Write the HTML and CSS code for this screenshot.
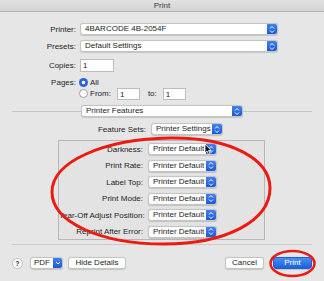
FILE: index.html
```html
<!DOCTYPE html>
<html lang="en">
<head>
    <meta charset="UTF-8">
    <title>Print</title>
    <link rel="stylesheet" href="styles.css">
</head>
<body>
<div class="window">
    <div class="titlebar">Print</div>

    <!-- printer / presets -->
    <div class="form">
        <div class="field row-printer">
            <span class="label">Printer:</span>
            <div class="popup w-wide">
                <span class="popup-text">4BARCODE 4B-2054F</span>
                <span class="stepper"><svg width="6" height="9" viewBox="0 0 6 9"><path d="M1 3.5 L3 1.5 L5 3.5 M1 5.5 L3 7.5 L5 5.5" fill="none" stroke="#fff" stroke-width="1"/></svg></span>
            </div>
        </div>
        <div class="field row-presets">
            <span class="label">Presets:</span>
            <div class="popup w-wide">
                <span class="popup-text">Default Settings</span>
                <span class="stepper"><svg width="6" height="9" viewBox="0 0 6 9"><path d="M1 3.5 L3 1.5 L5 3.5 M1 5.5 L3 7.5 L5 5.5" fill="none" stroke="#fff" stroke-width="1"/></svg></span>
            </div>
        </div>
        <div class="field row-copies">
            <span class="label">Copies:</span>
            <div class="textbox w-copies">1</div>
        </div>
        <div class="field row-pages">
            <span class="label">Pages:</span>
            <span class="radio checked"></span>
            <span class="radio-text">All</span>
        </div>
        <div class="field row-from">
            <span class="label"></span>
            <span class="radio"></span>
            <span class="radio-text">From:</span>
            <div class="textbox w-page">1</div>
            <span class="to-text">to:</span>
            <div class="textbox w-page">1</div>
        </div>
    </div>

    <!-- panel selector -->
    <div class="panel-select">
        <span class="sep-line"></span>
        <div class="popup w-panel">
            <span class="popup-text">Printer Features</span>
            <span class="stepper"><svg width="6" height="9" viewBox="0 0 6 9"><path d="M1 3.5 L3 1.5 L5 3.5 M1 5.5 L3 7.5 L5 5.5" fill="none" stroke="#fff" stroke-width="1"/></svg></span>
        </div>
        <span class="sep-line"></span>
    </div>

    <div class="field row-feature">
        <span class="label label-feature">Feature Sets:</span>
        <div class="popup w-feature">
            <span class="popup-text">Printer Settings</span>
            <span class="stepper"><svg width="6" height="9" viewBox="0 0 6 9"><path d="M1 3.5 L3 1.5 L5 3.5 M1 5.5 L3 7.5 L5 5.5" fill="none" stroke="#fff" stroke-width="1"/></svg></span>
        </div>
    </div>

    <!-- feature options -->
    <div class="feature-box">
        <div class="field opt-row">
            <span class="label label-opt">Darkness:</span>
            <div class="popup w-opt"><span class="popup-text">Printer Default</span><span class="stepper"><svg width="6" height="9" viewBox="0 0 6 9"><path d="M1 3.5 L3 1.5 L5 3.5 M1 5.5 L3 7.5 L5 5.5" fill="none" stroke="#fff" stroke-width="1"/></svg></span></div>
        </div>
        <div class="field opt-row">
            <span class="label label-opt">Print Rate:</span>
            <div class="popup w-opt"><span class="popup-text">Printer Default</span><span class="stepper"><svg width="6" height="9" viewBox="0 0 6 9"><path d="M1 3.5 L3 1.5 L5 3.5 M1 5.5 L3 7.5 L5 5.5" fill="none" stroke="#fff" stroke-width="1"/></svg></span></div>
        </div>
        <div class="field opt-row">
            <span class="label label-opt">Label Top:</span>
            <div class="popup w-opt"><span class="popup-text">Printer Default</span><span class="stepper"><svg width="6" height="9" viewBox="0 0 6 9"><path d="M1 3.5 L3 1.5 L5 3.5 M1 5.5 L3 7.5 L5 5.5" fill="none" stroke="#fff" stroke-width="1"/></svg></span></div>
        </div>
        <div class="field opt-row">
            <span class="label label-opt">Print Mode:</span>
            <div class="popup w-opt"><span class="popup-text">Printer Default</span><span class="stepper"><svg width="6" height="9" viewBox="0 0 6 9"><path d="M1 3.5 L3 1.5 L5 3.5 M1 5.5 L3 7.5 L5 5.5" fill="none" stroke="#fff" stroke-width="1"/></svg></span></div>
        </div>
        <div class="field opt-row">
            <span class="label label-opt">Tear-Off Adjust Position:</span>
            <div class="popup w-opt"><span class="popup-text">Printer Default</span><span class="stepper"><svg width="6" height="9" viewBox="0 0 6 9"><path d="M1 3.5 L3 1.5 L5 3.5 M1 5.5 L3 7.5 L5 5.5" fill="none" stroke="#fff" stroke-width="1"/></svg></span></div>
        </div>
        <div class="field opt-row">
            <span class="label label-opt">Reprint After Error:</span>
            <div class="popup w-opt"><span class="popup-text">Printer Default</span><span class="stepper"><svg width="6" height="9" viewBox="0 0 6 9"><path d="M1 3.5 L3 1.5 L5 3.5 M1 5.5 L3 7.5 L5 5.5" fill="none" stroke="#fff" stroke-width="1"/></svg></span></div>
        </div>
    </div>

    <div class="bottom-sep"></div>

    <!-- buttons -->
    <div class="button-bar">
        <span class="help-btn">?</span>
        <div class="pdf-btn">
            <span class="pdf-text">PDF</span>
            <span class="pdf-arrow"><svg width="6" height="4" viewBox="0 0 6 4"><path d="M1 1 L3 3 L5 1" fill="none" stroke="#fff" stroke-width="1"/></svg></span>
        </div>
        <span class="btn w-hide">Hide Details</span>
        <span class="spacer"></span>
        <span class="btn w-cancel">Cancel</span>
        <span class="btn btn-primary w-print">Print</span>
    </div>

    <!-- red marks drawn over the dialog -->
    <svg class="marks" width="324" height="281" viewBox="0 0 324 281">
        <path d="M170 138 C232 137 270 160 270 188 C270 221 226 244 164 244 C100 244 52 222 52 192 C52 161 105 139 170 138 Z" fill="none" stroke="#ec1b12" stroke-width="3"/>
        <ellipse cx="292.5" cy="263.5" rx="22" ry="12.5" fill="none" stroke="#ec1b12" stroke-width="2.5"/>
        <path d="M205 144 L205 153 L207 151 L208.6 154.5 L210 153.8 L208.5 150.5 L211.2 150.5 Z" fill="#111" stroke="#fff" stroke-width="0.8"/>
    </svg>
</div>
</body>
</html>
```

FILE: styles.css
```css
* { margin: 0; padding: 0; box-sizing: border-box; }
body {
    font-family: 'Liberation Sans', Arial, sans-serif;
    font-size: 8px;
    color: #1e1e1e;
    background: #e6e6e6;
}
.window {
    position: relative;
    width: 324px;
    height: 281px;
    background: #e6e6e6;
    overflow: hidden;
}
.titlebar {
    height: 12px;
    line-height: 11px;
    text-align: center;
    color: #3c3c3c;
    background: linear-gradient(#e2e2e2, #d3d3d3);
    border-bottom: 1px solid #b5b5b5;
}

/* generic rows */
.field { display: flex; align-items: center; }
.label {
    width: 80px;
    padding-right: 4px;
    text-align: right;
    flex-shrink: 0;
    white-space: nowrap;
}
.form { padding-top: 11px; }
.row-printer { height: 12px; }
.row-presets { height: 12px; margin-top: 5px; }
.row-copies { height: 13px; margin-top: 7px; }
.row-pages { height: 10px; margin-top: 5px; }
.row-from { height: 11px; margin-top: 1px; }

/* popup buttons */
.popup {
    display: flex;
    align-items: center;
    height: 12px;
    background: #fff;
    border: 1px solid #c4c4c4;
    border-radius: 3px;
    box-shadow: 0 0.5px 1px rgba(0, 0, 0, 0.15);
    overflow: hidden;
}
.popup-text {
    flex: 1;
    padding-left: 4px;
    white-space: nowrap;
    overflow: hidden;
    line-height: 10px;
}
.stepper {
    width: 10px;
    height: 100%;
    display: flex;
    align-items: center;
    justify-content: center;
    background: linear-gradient(#3f82f2, #1b5ad6);
}
.w-wide { width: 198px; }
.w-panel { width: 162px; height: 12px; }
.w-feature { width: 72px; }
.w-opt { width: 69px; }

/* text boxes */
.textbox {
    height: 13px;
    background: #fff;
    border: 1px solid #bdbdbd;
    padding-left: 2px;
    line-height: 11px;
}
.w-copies { width: 34px; }
.w-page { width: 23px; height: 12px; }
.row-from .w-page:nth-of-type(1) { margin-left: 6px; }
.to-text { margin-left: 8px; margin-right: 6px; }

/* radios */
.radio {
    width: 9px;
    height: 9px;
    border-radius: 50%;
    background: #fff;
    border: 1px solid #9e9e9e;
    margin-left: -1px;
}
.radio.checked {
    border: none;
    background: radial-gradient(circle, #fff 0 1.6px, #2566e0 2.1px);
}
.radio-text { margin-left: 2px; }

/* panel selector */
.panel-select {
    display: flex;
    align-items: center;
    margin-top: 6px;
    padding: 0 12px;
}
.sep-line { flex: 1; height: 1px; background: #c4c4c4; }

.row-feature { margin-top: 6px; height: 12px; }
.label-feature { width: 151px; padding-right: 5px; }

/* features box */
.feature-box {
    margin: 5px 0 0 58px;
    width: 207px;
    height: 100px;
    border: 1px solid #b7b7b7;
    background: #e3e3e3;
    padding-top: 2px;
    display: flex;
    flex-direction: column;
    gap: 4.6px;
}
.opt-row { height: 12px; }
.label-opt { width: 89px; padding-right: 5px; }

.bottom-sep {
    margin: 4px 12px 0;
    height: 1px;
    background: #cacaca;
}

/* bottom buttons */
.button-bar {
    display: flex;
    align-items: center;
    height: 12px;
    margin-top: 12px;
    padding: 0 12px;
}
.help-btn {
    width: 11px;
    height: 11px;
    border-radius: 50%;
    background: #fff;
    border: 1px solid #bcbcbc;
    font-size: 7px;
    font-weight: bold;
    line-height: 9px;
    text-align: center;
    color: #333;
}
.pdf-btn {
    display: flex;
    margin-left: 7px;
    width: 33px;
    height: 12px;
    border: 1px solid #c4c4c4;
    border-radius: 3px;
    background: #fff;
    overflow: hidden;
    box-shadow: 0 0.5px 1px rgba(0, 0, 0, 0.15);
}
.pdf-text { flex: 1; text-align: center; line-height: 10px; }
.pdf-arrow {
    width: 9px;
    display: flex;
    align-items: center;
    justify-content: center;
    background: linear-gradient(#3f82f2, #1b5ad6);
}
.btn {
    height: 12px;
    line-height: 10px;
    text-align: center;
    background: #fff;
    border: 1px solid #c4c4c4;
    border-radius: 3px;
    box-shadow: 0 0.5px 1px rgba(0, 0, 0, 0.15);
}
.w-hide { width: 58px; margin-left: 5px; }
.spacer { flex: 1; }
.w-cancel { width: 39px; }
.w-print { width: 39px; margin-left: 9px; }
.btn-primary {
    color: #fff;
    border-color: #1d5fd8;
    background: linear-gradient(#4a8ef5, #1d60dc);
}

.marks {
    position: absolute;
    left: 0;
    top: 0;
    pointer-events: none;
}
```
